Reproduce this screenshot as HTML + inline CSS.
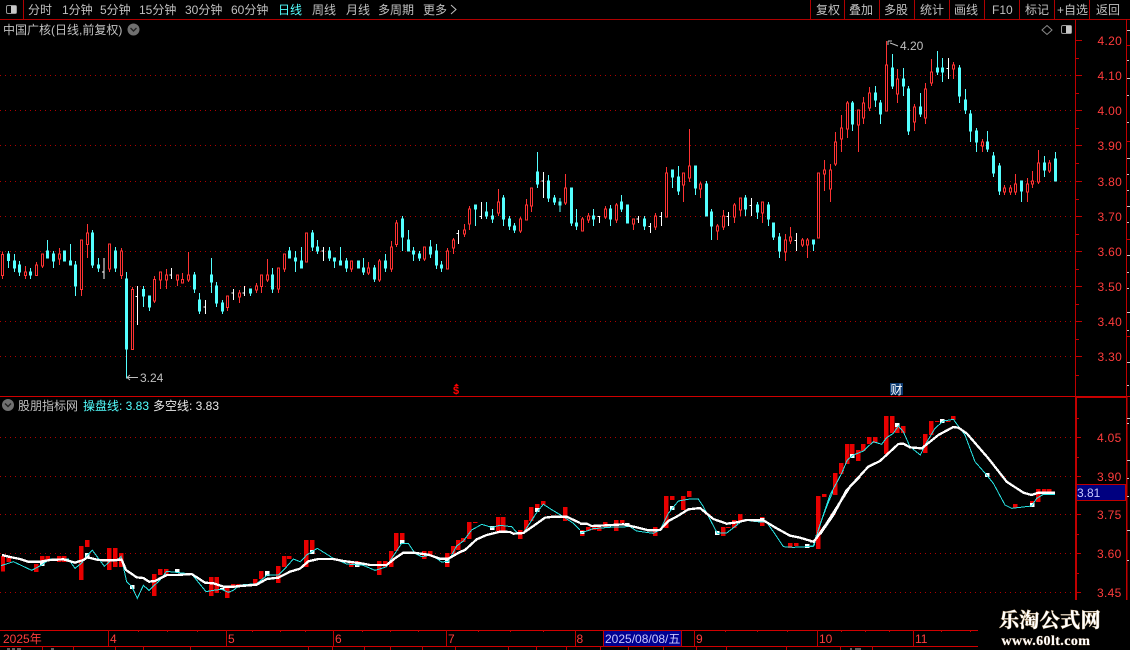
<!DOCTYPE html>
<html><head><meta charset="utf-8"><style>
html,body{margin:0;padding:0;background:#000;width:1130px;height:650px;overflow:hidden}
svg{display:block;position:absolute;left:0;top:0}
text{font-family:"Liberation Sans","WenQuanYi Zen Hei","Noto Sans CJK SC",sans-serif;font-size:12px}
.g{fill:#c0c0c0}.r{fill:#ff3c3c}.v{fill:#ff3c3c;letter-spacing:.3px}
.grid{stroke:#b00000;stroke-width:1;stroke-dasharray:1 4;fill:none}
.c{shape-rendering:crispEdges}
.R{stroke:#ff3232;stroke-width:3;fill:none}
.C{stroke:#54ffff;stroke-width:3;fill:#54ffff}
.W{stroke:#fff;stroke-width:3;fill:none}
.bar{fill:#e80000}
.sq{fill:#fff}
</style></head><body>
<svg width="1130" height="650" viewBox="0 0 1130 650" xmlns="http://www.w3.org/2000/svg">
<rect width="1130" height="650" fill="#000"/>

<!-- toolbar -->
<g class="c" stroke="#b00000" fill="none">
<path d="M0 19.5H1130M23.5 0V19M810.5 0V19M844.5 0V19M879.5 0V19M914.5 0V19M949.5 0V19M984.5 0V19M1019.5 0V19M1054.5 0V19M1089.5 0V19"/>
</g>
<rect x="6.5" y="5.5" width="10" height="8" rx="1.5" fill="#000" stroke="#9a9a9a"/>
<rect x="11" y="6" width="5" height="7" fill="#c8c8c8"/>
<g class="g">
<text x="28" y="14">分时</text><text x="62" y="14">1分钟</text><text x="100" y="14">5分钟</text><text x="139" y="14">15分钟</text><text x="185" y="14">30分钟</text><text x="231" y="14">60分钟</text>
<text x="278" y="14" style="fill:#54ffff">日线</text><text x="312" y="14">周线</text><text x="346" y="14">月线</text><text x="378" y="14">多周期</text><text x="423" y="14">更多</text>
<text x="816" y="14">复权</text><text x="849" y="14">叠加</text><text x="884" y="14">多股</text><text x="920" y="14">统计</text><text x="954" y="14">画线</text><text x="992" y="14">F10</text><text x="1025" y="14">标记</text><text x="1057" y="14">+自选</text><text x="1096" y="14">返回</text>
<text x="3" y="34">中国广核(日线,前复权)</text>
</g>
<path d="M451 5l5 4.5-5 4.5" fill="none" stroke="#c0c0c0"/>
<circle cx="133.5" cy="29.5" r="6" fill="#707070"/><path d="M130.5 28l3 3 3-3" fill="none" stroke="#222" stroke-width="1.4"/>
<path d="M1047 25.5l5 4.5-5 4.5-5-4.5z" fill="none" stroke="#8a8a8a"/>
<rect x="1061.5" y="25.5" width="10" height="8" rx="1.5" fill="#000" stroke="#9a9a9a"/><rect x="1066" y="26" width="5" height="7" fill="#c8c8c8"/>

<!-- upper grid -->
<path class="grid c" d="M0 75.5H1075M0 110.5H1075M0 145.5H1075M0 181.5H1075M0 216.5H1075M0 251.5H1075M0 286.5H1075M0 321.5H1075M0 356.5H1075"/>
<!-- lower grid -->
<path class="grid c" d="M0 437.5H1075M0 476.5H1075M0 514.5H1075M0 553.5H1075M0 592.5H1075"/>

<!-- candles: zone A -->
<g class="c" transform="translate(0 220) scale(.33333)">
<path class="R" d="M7 95V103M7 167V177M4 103h6V167h-6zM76 138V156M76 167V177M73 156h6V167h-6zM109 126V135M106 135h6V167h-6zM127 138V144M124 102h6V138h-6zM178 84V102M178 117V135M175 102h6V117h-6zM244 208V228M241 60h6V208h-6zM262 12V39M262 74V114M259 39h6V74h-6zM328 147V156M325 72h6V147h-6zM364 84V93M364 167V177M361 93h6V167h-6zM397 201V208M394 208h6V389h-6zM463 168V178M463 243V249M460 178h6V243h-6zM481 180V207M478 156h6V180h-6zM499 147V165M499 180V207M496 165h6V180h-6zM532 180V198M529 165h6V180h-6zM547 159V178M544 178h6V189h-6zM565 96V165M565 180V186M562 165h6V180h-6zM682 262V273M679 228h6V262h-6zM718 210V219M718 231V249M715 219h6V231h-6zM769 189V198M769 210V219M766 198h6V210h-6zM784 200V219M781 165h6V200h-6zM802 117V165M802 180V186M799 165h6V180h-6zM835 207V219M832 144h6V207h-6z"/>
<path class="C" d="M25 93V144M22 102h6V122h-6zM43 102V156M40 123h6V144h-6zM58 123V168M55 135h6V156h-6zM91 144V177M88 156h6V165h-6zM142 60V114M139 93h6V114h-6zM160 93V144M157 102h6V123h-6zM190 93h6V123h-6zM211 72V135M208 123h6V135h-6zM226 123V228M223 135h6V198h-6zM277 30V144M274 39h6V135h-6zM295 114V156M292 135h6V144h-6zM346 81V156M343 93h6V144h-6zM379 156V475M376 177h6V387h-6zM430 198V261M427 208h6V228h-6zM448 228V273M445 228h6V261h-6zM583 156V219M580 165h6V207h-6zM598 219V282M595 240h6V273h-6zM634 114V219M631 165h6V186h-6zM649 186V261M646 198h6V249h-6zM667 240V282M664 249h6V273h-6zM751 207V228M748 207h6V219h-6zM817 144V219M814 165h6V207h-6z"/>
<path class="W" d="M312 114V177M306 156h6M412 198V315M406 229h6M514 144V177M508 165h6M616 240V282M610 261h6M700 207V240M694 219h6M733 198V228M727 219h6"/>
</g>
<!-- zone B -->
<g class="c" transform="translate(280 180) scale(.33333)">
<path class="R" d="M13 267V276M10 222h6V267h-6zM76 159h6V246h-6zM214 267V276M211 243h6V267h-6zM265 246V264M265 279V285M262 264h6V279h-6zM298 237V243M298 300V306M295 243h6V300h-6zM334 183V201M334 267V276M331 201h6V267h-6zM349 120V129M349 194V201M346 129h6V194h-6zM433 237V243M430 201h6V237h-6zM502 204V213M499 213h6V267h-6zM520 174V180M520 204V222M517 180h6V204h-6zM553 132V150M553 162V171M550 150h6V162h-6zM568 78V87M568 132V150M565 87h6V132h-6zM655 27V66M655 99V108M652 66h6V99h-6zM721 111V117M721 153V159M718 117h6V153h-6zM739 57V75M736 75h6V120h-6zM754 78V96M751 24h6V78h-6z"/>
<path class="C" d="M28 201V234M25 213h6V234h-6zM46 213V276M43 234h6V243h-6zM64 201V264M61 243h6V264h-6zM97 150V213M94 159h6V201h-6zM112 180V222M109 201h6V213h-6zM148 201V243M145 213h6V234h-6zM163 234V264M160 234h6V243h-6zM181 201V255M178 243h6V255h-6zM199 234V276M196 243h6V264h-6zM232 243h6V264h-6zM250 234V285M247 264h6V276h-6zM283 255V306M280 264h6V297h-6zM316 222V276M313 243h6V264h-6zM367 108V213M364 117h6V171h-6zM385 150V213M382 180h6V213h-6zM400 201V243M397 213h6V222h-6zM418 213V243M415 222h6V234h-6zM451 180V234M448 201h6V222h-6zM469 192V267M466 213h6V255h-6zM484 243V276M481 255h6V264h-6zM586 75V138M583 75h6V87h-6zM619 66V117M616 96h6V108h-6zM637 87V129M634 108h6V117h-6zM670 45V138M667 54h6V117h-6zM688 108V150M685 117h6V138h-6zM703 129V159M700 138h6V150h-6zM772 -84V24M769 -24h6V12h-6zM805 -15V66M802 3h6V54h-6zM823 45V75M820 54h6V66h-6z"/>
<path class="W" d="M130 201V243M124 213h6M535 150V192M529 160h6M604 66V117M598 109h6M790 -24V54M784 3h6"/>
</g>
<!-- zone C -->
<g class="c" transform="translate(560 120) scale(.33333)">
<path class="R" d="M16 162V204M16 249V255M13 204h6V249h-6zM67 291V297M64 297h6V333h-6zM85 279V288M85 300V309M82 288h6V300h-6zM136 258V267M136 291V297M133 267h6V291h-6zM169 249V255M169 300V309M166 255h6V300h-6zM220 312V330M217 297h6V312h-6zM286 279V288M286 321V330M283 288h6V321h-6zM319 141V159M316 159h6V291h-6zM370 195V246M367 159h6V195h-6zM388 27V138M388 174V186M385 138h6V174h-6zM421 186V192M421 207V234M418 192h6V207h-6zM472 312V318M472 333V360M469 318h6V333h-6zM490 270V288M490 321V330M487 288h6V321h-6zM523 249V255M523 291V309M520 255h6V291h-6zM541 270V288M538 234h6V270h-6zM607 279V309M604 246h6V279h-6zM676 342V360M676 396V423M673 360h6V396h-6zM691 321V351M691 363V372M688 351h6V363h-6zM727 354V360M727 375V381M724 360h6V375h-6zM742 354V360M742 375V414M739 360h6V375h-6zM772 159h6V354h-6zM793 120V150M793 162V213M790 150h6V162h-6zM811 132V150M811 207V246M808 150h6V207h-6zM826 36V66M826 132V138M823 66h6V132h-6z"/>
<path class="C" d="M0 234V276M-3 246h6V255h-6zM34 204V318M31 204h6V309h-6zM49 267V330M46 309h6V318h-6zM100 267V318M97 288h6V297h-6zM151 255V318M148 267h6V297h-6zM184 225V276M181 246h6V267h-6zM199 255h6V309h-6zM253 288V330M250 297h6V318h-6zM337 150V204M334 150h6V171h-6zM355 138V225M352 171h6V213h-6zM406 138V225M403 138h6V204h-6zM439 183V288M436 192h6V288h-6zM454 267V360M451 276h6V318h-6zM556 225V288M553 234h6V267h-6zM592 246V297M589 255h6V276h-6zM625 246V318M622 255h6V297h-6zM640 309V360M637 309h6V351h-6zM658 339V414M655 351h6V393h-6zM760 360V393M757 360h6V372h-6z"/>
<path class="W" d="M118 288V309M112 289h6M235 288V309M229 297h6M271 309V339M265 319h6M304 276V318M298 289h6M505 276V318M499 289h6M574 234V288M568 256h6M709 339V393M703 361h6"/>
</g>
<!-- zone D -->
<g class="c" transform="translate(810 30) scale(.33333)">
<path class="R" d="M94 255V294M94 327V366M91 294h6V327h-6zM112 213V219M112 297V324M109 219h6V297h-6zM145 285V366M142 240h6V285h-6zM160 201V219M160 264V282M157 219h6V264h-6zM178 171V189M178 234V243M175 189h6V234h-6zM229 33V105M226 105h6V243h-6zM262 117V147M262 192V219M259 147h6V192h-6zM313 222V231M313 276V303M310 231h6V276h-6zM346 159V177M346 264V282M343 177h6V264h-6zM364 87V126M364 159V168M361 126h6V159h-6zM430 96V105M430 117V147M427 105h6V117h-6zM517 327V336M517 348V366M514 336h6V348h-6zM583 465V474M583 486V495M580 474h6V486h-6zM601 465V474M601 486V495M598 474h6V486h-6zM616 432V462M616 486V495M613 462h6V486h-6zM652 444V462M652 486V516M649 462h6V486h-6zM667 423V453M667 462V474M664 453h6V462h-6zM685 360V399M685 456V462M682 399h6V456h-6zM718 390V399M718 423V429M715 399h6V423h-6z"/>
<path class="C" d="M127 213V303M124 219h6V282h-6zM196 168V231M193 189h6V210h-6zM211 210V282M208 219h6V252h-6zM247 72V177M244 114h6V168h-6zM280 114V198M277 147h6V168h-6zM295 168V315M292 177h6V303h-6zM331 189V261M328 231h6V252h-6zM382 63V135M379 114h6V126h-6zM397 84V156M394 114h6V126h-6zM448 105V219M445 114h6V198h-6zM466 177V252M463 210h6V240h-6zM481 240V336M478 252h6V303h-6zM499 294V366M496 303h6V336h-6zM532 303V366M529 336h6V357h-6zM550 366V441M547 378h6V429h-6zM568 399V495M565 408h6V483h-6zM634 453V516M631 453h6V483h-6zM703 378V441M700 399h6V420h-6zM736 366V453M733 387h6V453h-6z"/>
<path class="W" d="M415 84V147M409 116h6"/>
</g>

<!-- high/low labels -->
<path d="M138 377.5H127M130 375l-3 2.5 3 2.5" fill="none" stroke="#c0c0c0"/>
<text class="g" x="140" y="382">3.24</text>
<path d="M898 46l-5-2-3-1M888 41h4M888 41v4" fill="none" stroke="#c0c0c0"/>
<text class="g" x="900" y="50">4.20</text>

<!-- event marks -->
<text x="453" y="394" style="fill:#f00;font-size:11px;font-weight:bold">$</text>
<path d="M456.5 383.5l2.5 2.5h-5z" fill="#f00"/>
<rect x="890" y="383" width="13" height="12" fill="#0c3a70"/>
<text x="890.500" y="394" style="fill:#fff;font-size:12px">财</text>

<!-- separators / axes -->
<g class="c" fill="none" stroke="#c00000">
<path d="M0 396.500H1130M0 630.500H978M0 646.500H978" stroke="#d00000"/>
<path d="M1075.500 19V600M1126.500 19V600M1076 397.500H1126"/>
<path d="M1076.500 397V600M1127 397V600"/>
<path d="M1076 40.500h6M1076 75.500h6M1076 110.500h6M1076 145.500h6M1076 181.500h6M1076 216.500h6M1076 251.500h6M1076 286.500h6M1076 321.500h6M1076 356.500h6"/>
<path d="M1076 58.500h3M1076 93.500h3M1076 128.500h3M1076 163.500h3M1076 199.500h3M1076 234.500h3M1076 269.500h3M1076 304.500h3M1076 339.500h3M1076 375.500h3"/>
<path d="M1076 437.500h5M1076 476.500h5M1076 514.500h5M1076 553.500h5M1076 592.500h5M1076 457.500h3M1076 534.500h3M1076 418.500h3M1076 495.500h3M1076 573.500h3"/>
<path d="M1127 45.500h3M1127 141.500h3M1127 239.500h3M1127 336.500h3"/>
<path d="M108.500 630V646M226.500 630V646M333.500 630V646M446.500 630V646M575.500 630V646M694.500 630V646M817.500 630V646M913.500 630V646"/>
<path d="M138.500 630v2M167.500 630v2M197.500 630v2M252.500 630v2M280.500 630v2M305.500 630v2M362.500 630v2M390.500 630v2M418.500 630v2M478.500 630v2M510.500 630v2M543.500 630v2M625.500 630v2M725.500 630v2M757.500 630v2M787.500 630v2M841.500 630v2M865.500 630v2M889.500 630v2M941.500 630v2M970.500 630v2"/>
<path d="M42.500 646v4M73.500 646v4M115.500 646v4M143.500 646v4M190.500 646v4M308.500 646v4M332.500 646v4M364.500 646v4M390.500 646v4M422.500 646v4M455.500 646v4M508.500 646v4M536.500 646v4M566.500 646v4M600.500 646v4M628.500 646v4M663.500 646v4M696.500 646v4M726.500 646v4M786.500 646v4M840.500 646v4M872.500 646v4"/>
</g>
<path class="c" d="M1127 30.500h3M1127 60.500h2M1127 78.500h3M1127 95.500h2M1127 122.500h2M1127 158.500h3M1127 174.500h2M1127 190.500h2M1127 206.500h3M1127 222.500h2M1127 255.500h3M1127 272.500h2M1127 288.500h2M1127 312.500h3M1127 330.500h2M1127 362.500h3M1127 385.500h2M1127 418.500h3M1127 423.500h2M1127 460.500h3M1127 478.500h2M1127 496.500h2M1127 530.500h3M1127 560.500h2" stroke="#c8c8c8" fill="none"/>
<text class="v" x="1097.500" y="45">4.20</text><text class="v" x="1097.500" y="80">4.10</text><text class="v" x="1097.500" y="115">4.00</text><text class="v" x="1097.500" y="150">3.90</text><text class="v" x="1097.500" y="186">3.80</text><text class="v" x="1097.500" y="221">3.70</text><text class="v" x="1097.500" y="256">3.60</text><text class="v" x="1097.500" y="291">3.50</text><text class="v" x="1097.500" y="326">3.40</text><text class="v" x="1097.500" y="361">3.30</text>
<text class="v" x="1097" y="442">4.05</text><text class="v" x="1097" y="481">3.90</text><text class="v" x="1097" y="519">3.75</text><text class="v" x="1097" y="558">3.60</text><text class="v" x="1097" y="597">3.45</text>

<!-- indicator header -->
<circle cx="8" cy="405" r="6" fill="#707070"/><path d="M5 403.500l3 3 3-3" fill="none" stroke="#222" stroke-width="1.400"/>
<text class="g" x="18" y="410">股朋指标网</text>
<text x="83" y="410" style="fill:#54ffff">操盘线: 3.83</text>
<text x="153" y="410" style="fill:#e8e8e8">多空线: 3.83</text>

<!-- indicator bars, zone 1 -->
<g class="c" transform="translate(0 395) scale(.33333)">
<path class="bar" d="M3 483h12v47H3zM19 489h14v12H19zM102 507h14v24h-14zM120 483h14v30h-14zM136 483h14v12h-14zM171 483h14v18h-14zM186 483h14v18h-14zM237 453h14v102h-14zM255 435h14v21h-14zM321 459h14v66h-14zM339 459h14v57h-14zM357 474h14v42h-14zM456 537h14v66h-14zM474 522h14v18h-14zM492 522h14v15h-14zM627 546h14v57h-14zM643 546h14v48h-14zM675 579h14v30h-14zM693 567h14v12h-14zM710 567h14v6h-14zM759 552h14v15h-14zM777 528h14v24h-14zM828 513h14v51h-14zM846 483h14v33h-14zM861 483h14v9h-14z"/>
<path class="sq" d="M255 474h14v15h-14zM120 501h14v12h-14zM390 570h14v12h-14zM525 522h14v9h-14zM660 579h14v6h-14zM795 528h14v15h-14z"/>
<polyline fill="none" stroke="#28e6e6" stroke-width="3" points="3,512 40,500 95,526 125,510 150,492 205,492 225,520 245,504 262,480 277,466 313,514 330,498 350,498 363,484 380,560 395,574 412,610 430,571 447,586 480,555 500,529 575,537 618,590 640,586 665,583 685,592 700,586 720,570 770,566 802,540 835,540 860,515 880,492 900,500"/>
<polyline fill="none" stroke="#fff" stroke-width="7" points="6,480 30,486 60,492 84,500 120,500 150,495 190,493 225,503 250,495 262,487 295,495 330,496 365,494 378,525 410,547 430,549 447,560 465,558 500,540 530,540 575,537 615,563 640,565 670,575 700,575 770,569 800,552 835,548 870,530 900,521"/>
</g>
<!-- zone 2 -->
<g class="c" transform="translate(300 470) scale(.33333)">
<path class="bar" d="M12 210h14v81H12zM30 210h14v40H30zM147 273h14v18h-14zM165 273h14v18h-14zM231 273h14v42h-14zM249 273h14v18h-14zM267 243h14v48h-14zM282 189h14v54h-14zM300 189h14v33h-14zM366 243h14v24h-14zM384 243h14v15h-14zM435 249h14v42h-14zM453 228h14v24h-14zM468 210h14v30h-14zM483 204h14v12h-14zM501 156h14v51h-14zM519 156h14v3h-14zM588 141h14v42h-14zM603 141h14v42h-14zM654 180h14v27h-14zM672 150h14v33h-14zM687 111h14v42h-14zM705 102h14v24h-14zM723 93h14v12h-14zM789 111h14v42h-14z"/>
<path class="sq" d="M30 240h14v12H30zM165 279h14v12h-14zM300 210h14v12h-14zM435 267h14v12h-14zM570 168h14v12h-14zM705 114h14v12h-14z"/>
<polyline fill="none" stroke="#28e6e6" stroke-width="3" points="0,277 20,255 52,235 100,265 140,282 190,286 225,301 258,291 285,250 305,220 325,220 345,250 365,260 395,255 425,276 445,274 470,228 490,213 515,180 545,163 575,172 600,166 635,170 650,187 670,189 712,125 730,103 760,122 790,140 820,160 840,180"/>
<polyline fill="none" stroke="#fff" stroke-width="7" points="0,296 25,274 55,267 100,267 130,273 160,277 190,281 210,285 260,285 285,265 310,248 340,248 385,254 420,266 445,266 480,246 495,240 530,208 560,195 600,185 630,186 640,191 670,189 700,168 735,143 760,140 800,140 840,159"/>
</g>
<!-- zone 3 -->
<g class="c" transform="translate(580 470) scale(.33333)">
<path class="bar" d="M0 180h14v18H0zM18 171h14v12H18zM36 171h14v9H36zM51 171h14v12H51zM69 156h14v15H69zM102 150h14v33h-14zM120 150h14v9h-14zM219 171h14v27h-14zM252 78h14v96h-14zM270 78h14v12h-14zM303 78h14v42h-14zM321 63h14v18h-14zM423 171h14v27h-14zM438 171h14v3h-14zM456 150h14v24h-14zM474 132h14v21h-14zM540 141h14v27h-14zM624 219h14v15h-14zM642 219h14v9h-14zM708 78h14v159h-14zM726 72h14v9h-14zM759 9h14v66h-14zM777 0h14v12h-14z"/>
<path class="sq" d="M0 183h14v9H0zM135 159h14v9h-14zM270 108h14v12h-14zM405 183h14v12h-14zM540 144h14v9h-14zM675 222h14v12h-14z"/>
<polyline fill="none" stroke="#28e6e6" stroke-width="3" points="0,190 40,176 100,171 150,170 170,183 220,190 240,180 265,130 295,93 330,87 355,87 370,110 412,190 440,189 490,150 530,155 560,157 580,185 610,230 640,232 700,229 710,190 740,110 765,50 790,0"/>
<polyline fill="none" stroke="#fff" stroke-width="7" points="0,161 20,161 35,168 80,166 130,163 170,172 205,181 240,180 265,153 290,140 325,118 360,114 400,147 440,161 470,157 500,150 550,151 590,175 630,197 660,203 700,215 715,200 760,135 800,60 840,20"/>
</g>
<!-- zone 4 -->
<g class="c" transform="translate(810 400) scale(.33333)">
<path class="bar" d="M18 288h14v159H18zM36 282h14v9H36zM69 219h14v66H69zM87 189h14v33H87zM105 132h14v60h-14zM120 132h14v36h-14zM138 150h14v33h-14zM153 132h14v21h-14zM171 111h14v21h-14zM189 111h14v18h-14zM222 48h14v114h-14zM240 48h14v51h-14zM255 69h14v30h-14zM273 78h14v21h-14zM339 102h14v57h-14zM357 63h14v42h-14zM375 63h14v3h-14zM408 63h14v3h-14zM423 48h14v12h-14zM609 312h14v12h-14zM660 303h14v18h-14zM678 267h14v39h-14zM696 267h14v18h-14zM711 267h14v18h-14z"/>
<path class="sq" d="M120 162h14v12h-14zM255 69h14v12h-14zM390 57h14v12h-14zM525 219h14v12h-14zM660 309h14v12h-14z"/>
<polyline fill="none" stroke="#28e6e6" stroke-width="3" points="0,438 12,437 25,390 60,285 95,220 112,180 130,165 160,153 190,125 215,133 230,113 250,100 265,78 280,95 300,140 331,165 345,135 375,85 400,63 430,58 465,105 495,185 530,225 550,250 585,315 605,325 665,318 680,295 700,283 735,283"/>
<polyline fill="none" stroke="#fff" stroke-width="7" points="0,424 12,425 50,370 85,315 120,260 175,200 210,183 265,132 280,131 300,142 335,145 385,105 430,81 445,83 470,100 535,175 590,245 640,278 665,285 685,278 735,278"/>
</g>

<!-- value flag -->
<rect class="c" x="1076.500" y="484.500" width="49" height="16" fill="#000080" stroke="#c00000"/>
<text x="1077" y="497" style="fill:#c8c8ff">3.81</text>

<!-- time axis -->
<text class="r" x="3" y="643">2025年</text>
<text class="r" x="110" y="643">4</text><text class="r" x="228" y="643">5</text><text class="r" x="335" y="643">6</text><text class="r" x="448" y="643">7</text><text class="r" x="576.500" y="643">8</text><text class="r" x="696" y="643">9</text><text class="r" x="819" y="643">10</text><text class="r" x="915" y="643">11</text>
<rect class="c" x="603.500" y="630.500" width="78" height="16" fill="#000090" stroke="#c00000"/>
<text x="605" y="643" style="fill:#c8c8ff">2025/08/08/五</text>
<path class="c" d="M7 649h3M12 649h3M17 649h4M51 649h3M850 649h2M855 649h6" stroke="#c0c0c0" fill="none"/>

<!-- watermark -->
<rect x="978" y="600" width="152" height="50" fill="#000"/>
<text x="999" y="627" style="font-family:'Noto Serif CJK SC',serif;font-size:20px;font-weight:700;fill:#fff;letter-spacing:.4px;paint-order:stroke;stroke:#b89a70;stroke-width:.8px">乐淘公式网</text>
<text x="1001.500" y="645" style="font-family:'Liberation Serif',serif;font-size:14px;font-weight:700;fill:#fff;letter-spacing:.4px;paint-order:stroke;stroke:#8a6a48;stroke-width:.6px">www.60lt.com</text>
</svg>
</body></html>
